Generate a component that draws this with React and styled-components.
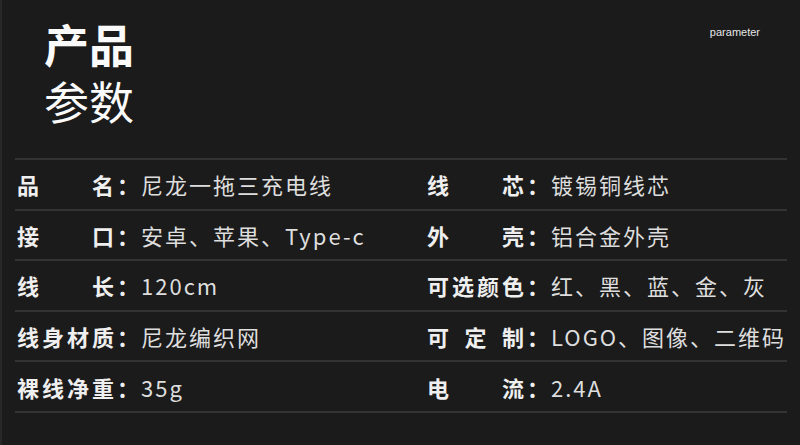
import React from 'react'
import styled, { createGlobalStyle } from 'styled-components'

const GlobalStyle = createGlobalStyle`
  html, body {
    margin: 0;
    padding: 0;
    background: #1b1b1b;
  }
  body {
    font-family: "Noto Sans CJK SC", "Noto Sans", sans-serif;
  }
`

const rows = [
  [['品', '名'], '尼龙一拖三充电线', ['线', '芯'], '镀锡铜线芯'],
  [['接', '口'], '安卓、苹果、Type-c', ['外', '壳'], '铝合金外壳'],
  [['线', '长'], '120cm', ['可选颜色'], '红、黑、蓝、金、灰'],
  [['线身材质'], '尼龙编织网', ['可', '定', '制'], 'LOGO、图像、二维码'],
  [['裸线净重'], '35g', ['电', '流'], '2.4A'],
]

const Spec = ({ label, value }) => (
  <Cell>
    <Label>{label.join(' ')}</Label>
    <Colon>：</Colon>
    <Value>{value}</Value>
  </Cell>
)

const App = () => {
  return (
    <Page>
      <GlobalStyle />
      <Header>
        <Title>
          <strong>产品</strong>
          <span>参数</span>
        </Title>
        <Tag>parameter</Tag>
      </Header>
      <Table>
        {rows.map((r, i) => (
          <Row key={i}>
            <Spec label={r[0]} value={r[1]} />
            <Spec label={r[2]} value={r[3]} />
          </Row>
        ))}
      </Table>
    </Page>
  )
}

const Page = styled.div`
  width: 800px;
  height: 445px;
  box-sizing: border-box;
  background: #1b1b1b;
  border-left: 2px solid #282828;
  overflow: hidden;
`

const Header = styled.div`
  display: flex;
  justify-content: space-between;
  align-items: flex-start;
  height: 158px;
  box-sizing: border-box;
  padding: 21px 40px 0 42px;
`

const Title = styled.h1`
  margin: 0;
  display: flex;
  flex-direction: column;
  gap: 12px;
  font-size: 45px;
  line-height: 45px;
  color: #fafafa;
  letter-spacing: 0;

  strong {
    font-weight: 700;
  }

  span {
    font-weight: 400;
  }
`

const Tag = styled.div`
  margin-top: 5px;
  font-family: "Liberation Sans", Arial, sans-serif;
  font-size: 11px;
  color: #e6e6e6;
`

const Table = styled.div`
  margin-left: 13px;
  width: 772px;
  border-top: 2px solid #333333;
`

const Row = styled.div`
  display: grid;
  grid-template-columns: 410px 1fr;
  height: 50.6px;
  box-sizing: border-box;
  border-bottom: 2px solid #333333;
  align-items: center;
`

const Cell = styled.div`
  display: flex;
  align-items: center;
  padding-left: 2px;
  font-size: 22px;
  line-height: 30px;
`

const Label = styled.span`
  display: inline-block;
  width: 97px;
  text-align: justify;
  text-align-last: justify;
  font-weight: 700;
  color: #efefef;
  white-space: nowrap;
`

const Colon = styled.span`
  margin-left: 3px;
  width: 24px;
  font-weight: 700;
  color: #efefef;
`

const Value = styled.span`
  font-weight: 400;
  color: #dedede;
  letter-spacing: 2px;
  white-space: nowrap;
`

export default App
